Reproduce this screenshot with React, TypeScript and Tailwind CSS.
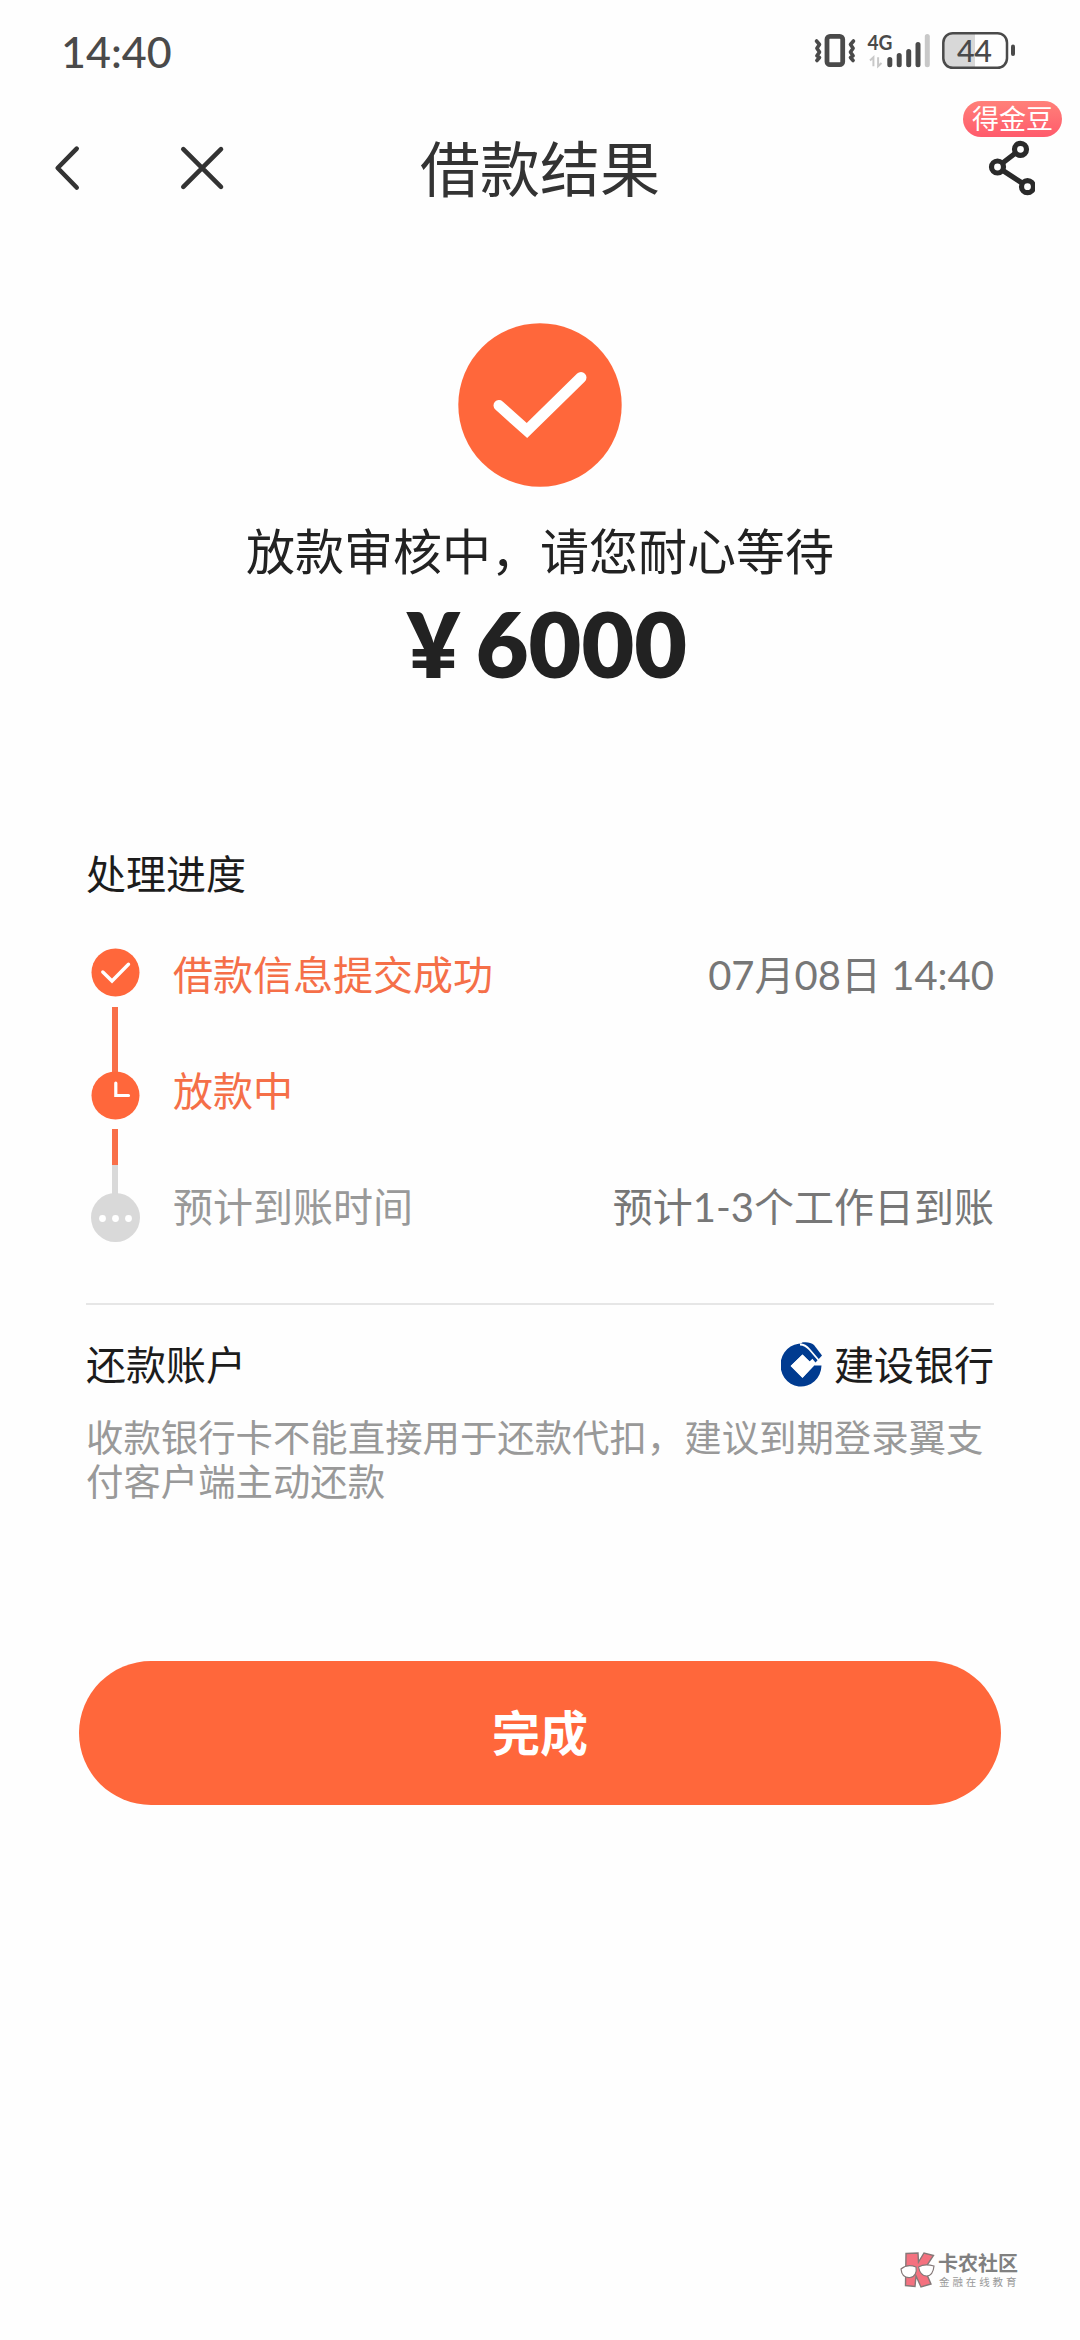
import { clsx } from "clsx";

type Step = {
    title: string
    note?: string
    state: "done" | "doing" | "waiting"
}

const steps: Step[] = [
    { title: "借款信息提交成功", note: "07月08日 14:40", state: "done" },
    { title: "放款中", state: "doing" },
    { title: "预计到账时间", note: "预计1-3个工作日到账", state: "waiting" },
]

function StatusBar() {
    return (
        <div className="h-[100px] flex justify-between items-start pl-[61px] pr-[60px] text-[#4a4a4a]">
            <span className="text-[43px] leading-[52px] font-medium mt-[26px]">14:40</span>
            <svg width="208" height="40" viewBox="812 31 208 40" className="mt-[31px]" fill="none" stroke="#4a4a4a">
                <rect x="827" y="36.3" width="15.7" height="28.4" rx="3" strokeWidth="4.8" />
                <path d="M816.5 41l3 3.5-2.6 3.8 2.6 3.8-2.6 3.6 2.6 1.8-2.6 3" strokeWidth="3.6" strokeLinejoin="round" strokeLinecap="round" />
                <path d="M853.5 41l-3 3.5 2.6 3.8-2.6 3.8 2.6 3.6-2.6 1.8 2.6 3" strokeWidth="3.6" strokeLinejoin="round" strokeLinecap="round" />
                <text x="867.5" y="50" fontSize="21" fontWeight="700" fill="#4a4a4a" stroke="none" textLength="25" lengthAdjust="spacingAndGlyphs">4G</text>
                <path d="M870 60.5l3.4-3.2v9M881.500 63l-3.400 3.200v-9" stroke="#c8c8c8" strokeWidth="2" />
                <g strokeWidth="5" strokeLinecap="round">
                    <path d="M889.800 59.500v5.200M899.200 55.500v9.200M908.700 51.500v13.200M918 44.500v20.200" />
                    <path d="M927.300 36.500v28.200" stroke="#c8c8c8" />
                </g>
                <path d="M975 34v33.500H953a9.500 9.500 0 0 1-9.500-9.500V43.500a9.500 9.500 0 0 1 9.500-9.500z" fill="#d8d8d8" stroke="none" />
                <rect x="943.300" y="33.200" width="63.700" height="34.600" rx="9.500" strokeWidth="2.500" />
                <path d="M1013 46.500v7.500" strokeWidth="4" strokeLinecap="round" />
                <text x="957" y="61.500" fontSize="30.500" fontWeight="500" fill="#4a4a4a" stroke="none" textLength="35" lengthAdjust="spacing">44</text>
            </svg>
        </div>
    )
}

function NavBar() {
    return (
        <div className="relative h-[138px] flex items-center justify-center">
            <svg width="180" height="50" viewBox="50 143 180 50" className="absolute left-[50px] top-[43px]" fill="none" stroke="#333" strokeWidth="4.6" strokeLinecap="round" strokeLinejoin="round">
                <path d="M76.700 148.700L57.700 168l19 19.500" />
                <path d="M183.300 149.200l37.700 37.600M221 149.200l-37.700 37.600" />
            </svg>
            <h1 className="text-[60px] leading-[80px] text-[#333]">借款结果</h1>
            <span className="absolute left-[963px] top-[1px] w-[99px] h-[36px] rounded-full bg-linear-to-b from-[#ff8079] to-[#ff5a6c] text-white text-[27px] leading-[35px] text-center">得金豆</span>
            <svg width="50" height="60" viewBox="985 138 50 60" className="absolute left-[985px] top-[38px]" fill="none" stroke="#2a2a2a" strokeWidth="5.200">
                <circle cx="1020.500" cy="149.300" r="6" />
                <circle cx="997.500" cy="167" r="6" />
                <circle cx="1027.500" cy="186.700" r="6" />
                <path d="M1002.300 163.200l13.300-10.200M1002.500 170.300l20 13" />
            </svg>
        </div>
    )
}

function StepIcon({ state }: { state: Step["state"] }) {
    return (
        <svg width="49" height="49" viewBox="-24.500 -24.500 49 49" fill="none" className="relative shrink-0">
            <circle r={state == "waiting" ? 24.5 : 24} fill={state == "waiting" ? "#d9d9d9" : "#ff673b"} />
            {state == "done" && <path d="M-12.700-.500l9.200 9L13-8.300" stroke="#fff" strokeWidth="3.400" strokeLinecap="round" />}
            {state == "doing" && <path d="M.300-12.500V0H13" stroke="#fff" strokeWidth="3.200" strokeLinecap="round" />}
            {state == "waiting" && [-13, 0, 13].map(x => <circle key={x} cx={x} cy="1" r="3.400" fill="#fff" />)}
        </svg>
    )
}

function Progress() {
    return (
        <div className="flex mt-[46px]">
            {/* icons and the bars between them */}
            <div className="w-[58px] pt-px flex flex-col items-center">
                <StepIcon state="done" />
                <div className="w-[6px] h-[66px] mt-[10px] -mb-[2px] bg-[#f96f49]" />
                <StepIcon state="doing" />
                <div className="w-[6px] h-[36px] mt-[9px] bg-[#f96f49]" />
                <div className="w-[6px] h-[30px] -mb-[2px] bg-[#d9d9d9]" />
                <StepIcon state="waiting" />
            </div>
            <div className="flex-1 pl-[29px] pt-[1px]">
                {steps.map(step => (
                    <div key={step.title} className="flex justify-between h-[116px] text-[40px] leading-[54px]">
                        <span className={clsx(step.state == "waiting" ? "text-[#999]" : "text-[#f56f48]")}>{step.title}</span>
                        <span className="text-[#777]">{step.note}</span>
                    </div>
                ))}
            </div>
        </div>
    )
}

function BankLogo() {
    return (
        <svg width="42" height="46" viewBox="0 0 42 46" className="mr-[11px]">
            <path d="M26 2.500A20.500 21.500 0 1 0 40.500 23.500H33L21.500 36 9.500 24 21.500 12.500l7 7 6.500-6z" fill="#003b90" />
            <path d="M21.500 12.500L33 23.800 21.500 35.500 10 23.800z" fill="#fff" />
            <path d="M21 .600c5-1 9 .2 12 2.400l8 10.500-6.500 7L20 2.800" fill="#003b90" />
            <path d="M19 2.500c4 0 7 2 9.500 5l9 10.500" stroke="#fff" strokeWidth="1.800" fill="none" />
        </svg>
    )
}

function Watermark() {
    return (
        <div className="absolute left-[900px] top-[2250px] flex">
            <svg width="36" height="40" viewBox="0 0 36 40">
                <path d="M6 3.500l12-.5.500 9L24 3l9.500 2.500L24.500 19 31 34l-10 3-5-11-1 10.500-9.500-1z" fill="#f4717f" stroke="#857878" strokeWidth="1.400" />
                <path d="M1 19c4-3.500 10-4 15-2 1 5-1 10-6 10.500C4 28 1.500 24 1 19zM18.500 17c4-2.500 10-2.500 15.500-1-.5 5-2 9.500-7 10-5 .2-7.500-4-8.500-9z" fill="#fff" stroke="#857878" strokeWidth="1.200" />
            </svg>
            <div className="ml-[2px] pt-[2px] whitespace-nowrap">
                <div className="text-[20px] leading-[23px] font-bold text-[#808080]">卡农社区</div>
                <div className="pl-px text-[10.5px] leading-[14px] tracking-[2.9px] text-[#999]">金融在线教育</div>
            </div>
        </div>
    )
}

export default function App() {
    return (
        <div className="relative w-[1080px] h-[2340px] overflow-hidden bg-[#fefefe] font-['Lato','Noto_Sans_CJK_SC',sans-serif]">
            <StatusBar />
            <NavBar />

            <div className="flex flex-col items-center pt-[85px]">
                <svg width="164" height="164" viewBox="458 323 164 164" fill="none">
                    <circle cx="540" cy="405" r="81.700" fill="#ff673b" />
                    <path d="M499 405.500l28 25L581 377.500" stroke="#fff" strokeWidth="11" strokeLinecap="round" />
                </svg>
                <p className="mt-[32px] text-[49px] leading-[64px] text-[#222]">放款审核中，请您耐心等待</p>
                <p className="mt-[10px] ml-[14px] h-[100px] flex items-center text-[91px] leading-[100px] font-extrabold text-[#222]">
                    <span className="mr-[16px]">¥</span>6000
                </p>
            </div>

            <div className="px-[86px] pt-[154px]">
                <h2 className="text-[40px] leading-[54px] text-[#1c1c1c]">处理进度</h2>
                <Progress />
                <div className="mt-[7px] h-[2px] bg-[#e6e6e6]" />
                <div className="mt-[33px] flex justify-between text-[40px] leading-[54px] text-[#1c1c1c]">
                    <span>还款账户</span>
                    <div className="flex items-center">
                        <BankLogo />
                        建设银行
                    </div>
                </div>
                <p className="mt-[24px] text-[37.4px] leading-[43.5px] text-[#999]">收款银行卡不能直接用于还款代扣，建议到期登录翼支付客户端主动还款</p>
            </div>

            <button className="block mt-[158px] ml-[79px] w-[922px] h-[144px] rounded-full bg-[#ff673b] text-white text-[48px] font-bold">完成</button>

            <Watermark />
        </div>
    )
}
